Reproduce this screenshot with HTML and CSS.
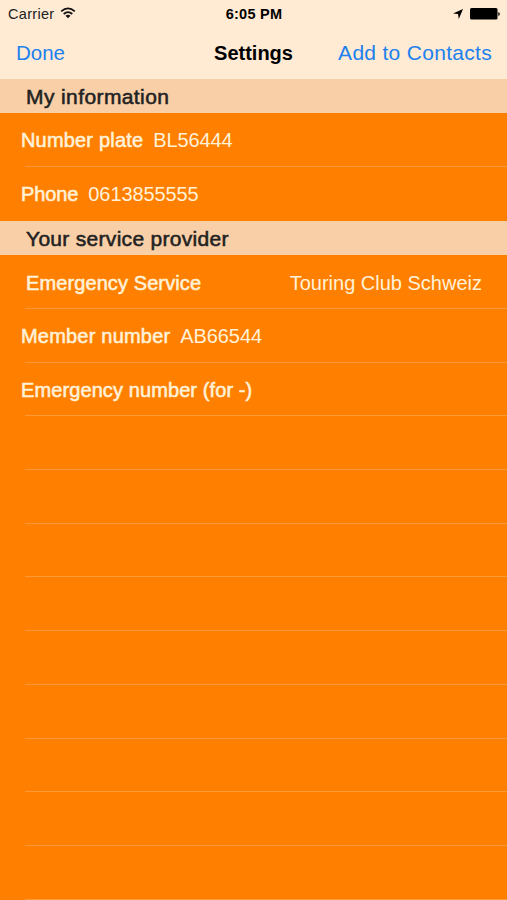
FILE: index.html
```html
<!DOCTYPE html>
<html lang="en">
    <head>
        <meta charset="UTF-8">
        <meta name="viewport" content="width=device-width, initial-scale=1">
        <title>Settings</title>
        <link rel="stylesheet" href="styles.css">
    </head>

    <body>
        <header>
            <div class="status-bar">
                <div class="carrier">
                    <span>Carrier</span>
                    <svg class="wifi" viewBox="0 0 16 12" aria-hidden="true">
                        <path d="M1.2 4.4 Q8 -1.6 14.8 4.4" />
                        <path d="M3.7 7 Q8 3.2 12.3 7" />
                        <path class="dot" d="M5.5 8.7 Q8 6.7 10.5 8.7 L8 11.3 Z" />
                    </svg>
                </div>
                <div class="time">6:05 PM</div>
                <div class="indicators">
                    <svg class="location" viewBox="0 0 10 10" aria-hidden="true">
                        <path d="M10 0 L5.8 10 L5 5 L0 4.5 Z" />
                    </svg>
                    <svg class="battery" viewBox="0 0 30 12" aria-hidden="true">
                        <rect x="0" y="0" width="27.5" height="11.5" rx="1.5" />
                        <path d="M28.3 4 Q29.8 4.5 29.8 6 Q29.8 7.5 28.3 8 Z" />
                    </svg>
                </div>
            </div>
            <nav class="nav-bar">
                <a class="done">Done</a>
                <h1>Settings</h1>
                <a class="add">Add to Contacts</a>
            </nav>
        </header>

        <main>
            <h2>My information</h2>
            <ul class="info">
                <li><span class="label plate">Number plate</span><span class="value">BL56444</span></li>
                <li class="last"><span class="label phone">Phone</span><span class="value">0613855555</span></li>
            </ul>

            <h2 class="provider">Your service provider</h2>
            <ul>
                <li class="detail"><span class="label">Emergency Service</span><span class="club">Touring Club Schweiz</span></li>
                <li><span class="label member">Member number</span><span class="value">AB66544</span></li>
                <li><span class="label">Emergency number (for -)</span></li>
                <li></li>
                <li></li>
                <li></li>
                <li></li>
                <li></li>
                <li></li>
                <li></li>
                <li></li>
                <li></li>
            </ul>
        </main>
    </body>
</html>
```

FILE: styles.css
```css
* {
    margin: 0;
    padding: 0;
    box-sizing: border-box;
}

body {
    height: 900px;
    overflow: hidden;
    background: #ff8000;
    font-family: "Liberation Sans", Arial, sans-serif;
    font-size: 20px;
}

header {
    height: 79px;
    background: #ffead3;
    color: #000;
}

.status-bar {
    display: grid;
    grid-template-columns: 1fr auto 1fr;
    align-items: center;
    height: 27px;
    padding: 0 7px 0 8px;
    font-size: 14.5px;
}

.carrier {
    display: flex;
    align-items: center;
    gap: 6px;
    color: #222;
    letter-spacing: 0.3px;
}

.wifi {
    width: 16px;
    height: 12px;
    margin-top: -2px;
    fill: none;
    stroke: #111;
    stroke-width: 1.8;
}

.wifi .dot {
    fill: #111;
    stroke: none;
}

.time {
    font-weight: bold;
    font-size: 14.5px;
    letter-spacing: 0.25px;
}

.indicators {
    display: flex;
    justify-content: flex-end;
    align-items: center;
    gap: 7px;
}

.location {
    width: 10px;
    height: 10px;
}

.battery {
    width: 30px;
    height: 12px;
}

.nav-bar {
    display: grid;
    grid-template-columns: 1fr auto 1fr;
    align-items: center;
    height: 52px;
    padding: 0 15px;
}

.nav-bar a {
    color: #1c80ee;
    font-size: 20.5px;
}

.nav-bar .done {
    padding-left: 1px;
}

.nav-bar h1 {
    font-size: 20px;
}

.nav-bar .add {
    font-size: 21px;
    text-align: right;
    letter-spacing: 0.3px;
    margin-left: -20px;
}

h2 {
    height: 34px;
    padding-left: 26px;
    background: #f8cfa7;
    color: #222;
    font-size: 21px;
    font-weight: normal;
    letter-spacing: 0.4px;
    line-height: 36px;
    -webkit-text-stroke: 0.55px #222;
}

h2.provider {
    letter-spacing: 0.3px;
}

ul {
    list-style: none;
}

li {
    display: flex;
    align-items: center;
    gap: 10px;
    height: 53.7px;
    padding: 2px 0 0 21px;
    color: #fff1d8;
    background: linear-gradient(#ff9838, #ff9838) 25px 100% / 100% 1px no-repeat;
}

.info li {
    height: 54px;
    padding-top: 1px;
}

li.last {
    background: none;
}

li.detail {
    justify-content: space-between;
    height: 54px;
    padding: 2px 25px 0 26px;
}

.label {
    letter-spacing: 0.1px;
    -webkit-text-stroke: 0.55px #fff1d8;
}

.label.plate {
    letter-spacing: 0.18px;
}

.label.phone {
    letter-spacing: -0.1px;
}

.label.member {
    letter-spacing: 0.2px;
}

.value {
    letter-spacing: -0.1px;
}
```
